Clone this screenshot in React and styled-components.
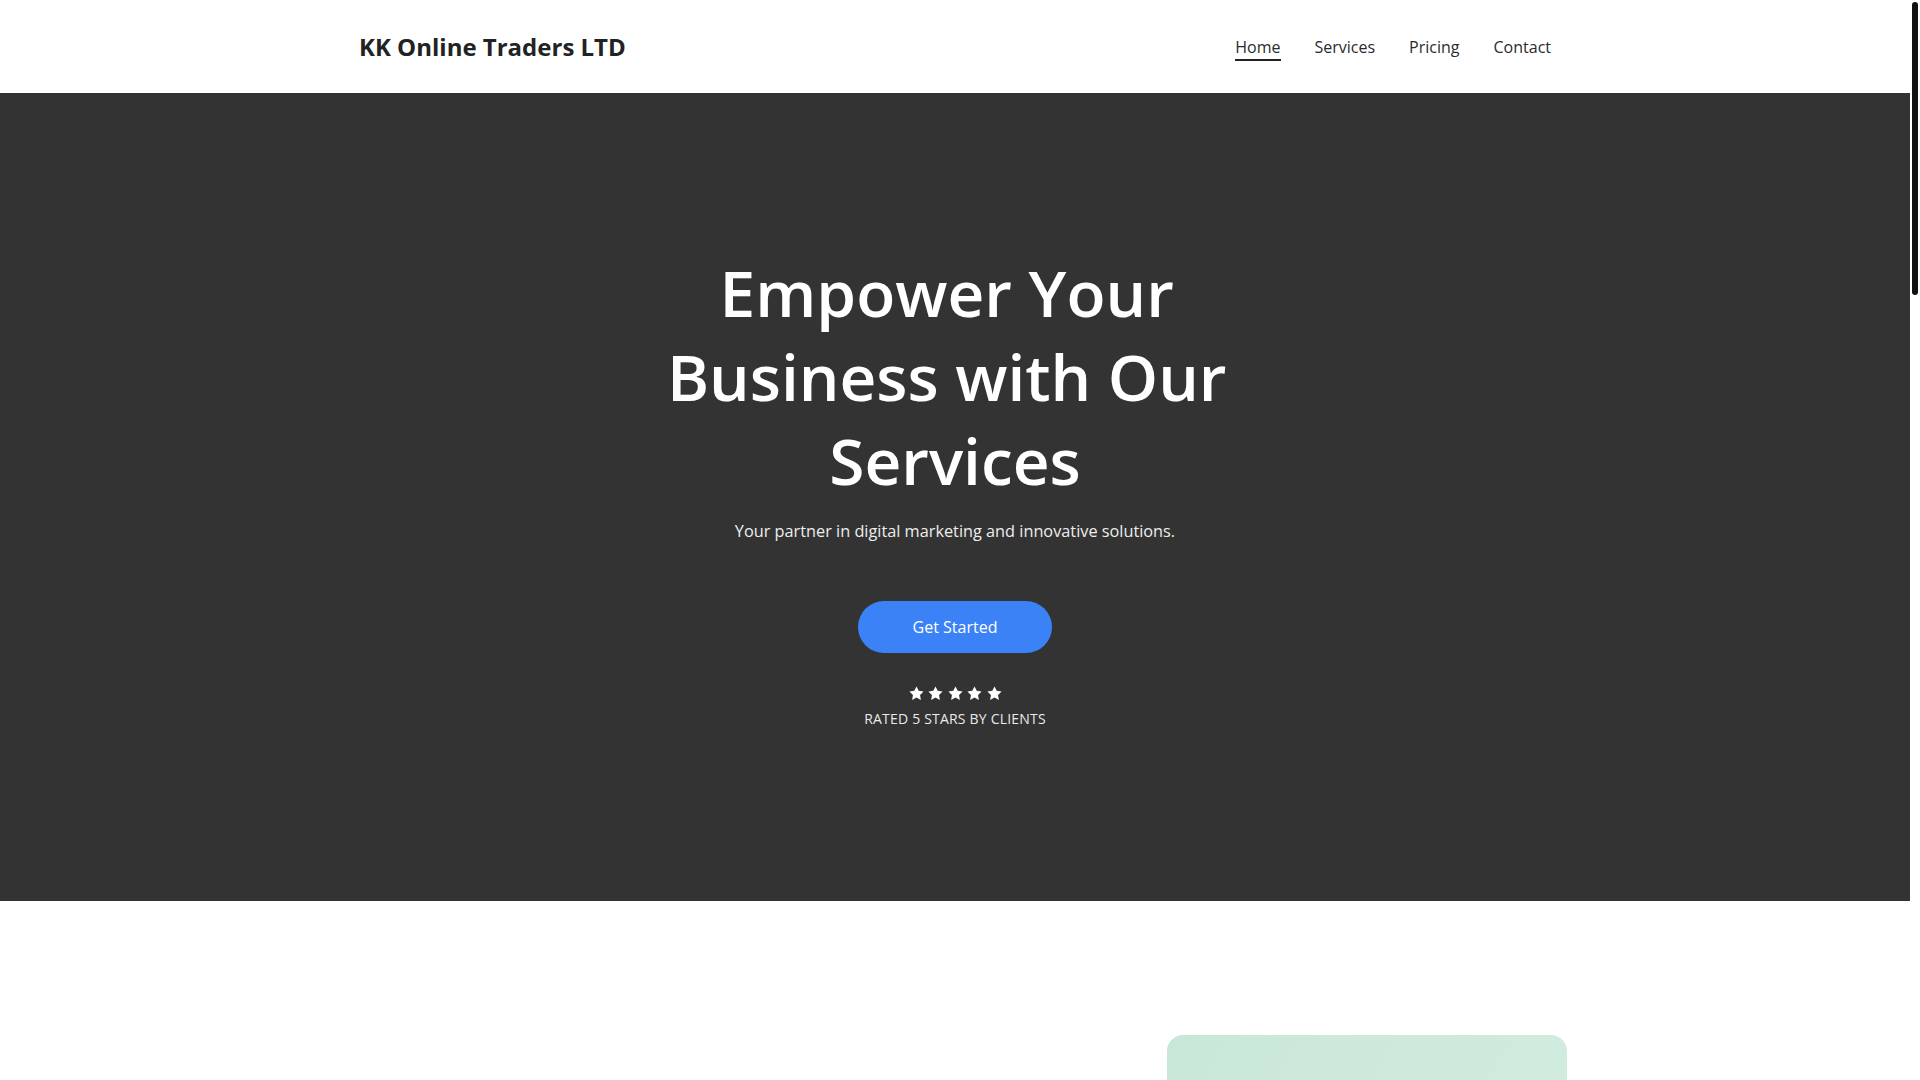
import React from "react";
import styled, { createGlobalStyle } from "styled-components";

const GlobalStyle = createGlobalStyle`
  * { box-sizing: border-box; }
  html, body {
    margin: 0;
    padding: 0;
    height: 100%;
    overflow: hidden;
    background: #fff;
    font-family: "Open Sans", "Noto Sans", sans-serif;
    color: #222;
  }
`;

// page shell: scrolling content plus the thin scroll rail on the right
const Shell = styled.div`
  display: flex;
  height: 100vh;
`;

const Main = styled.main`
  flex: 1;
  min-width: 0;
  overflow-y: auto;
  scrollbar-width: none;
  background: #fff;

  &::-webkit-scrollbar {
    display: none;
  }
`;

const Rail = styled.div`
  width: 10px;
  flex-shrink: 0;
  background: #fff;
  padding: 2px;
`;

const Thumb = styled.div`
  height: 293px;
  border-radius: 4px;
  background: #111;
`;

const Header = styled.header`
  height: 93px;
  background: #fff;
  display: flex;
  align-items: center;
`;

const Container = styled.div`
  width: 100%;
  max-width: ${(p) => p.$max || 1200}px;
  margin: 0 auto;
  padding: 0 4px;
`;

const HeaderInner = styled(Container)`
  display: flex;
  align-items: center;
  justify-content: space-between;
`;

const Brand = styled.div`
  font-size: 24px;
  font-weight: 700;
  line-height: 1.5;
  color: #222;
`;

const Nav = styled.nav`
  display: flex;
  gap: 34px;
`;

const NavLink = styled.a`
  font-size: 16px;
  line-height: 1.5;
  color: #2b2b2b;
  text-decoration: none;
  padding-top: 2px;
  border-bottom: 2px solid ${(p) => (p.$active ? "#222" : "transparent")};
  cursor: pointer;
`;

const Hero = styled.section`
  background: #333333;
  padding: 158px 20px 172px;
  display: flex;
  flex-direction: column;
  align-items: center;
  text-align: center;
  color: #fff;
`;

const HeroTitle = styled.h1`
  margin: 0 0 16px;
  max-width: 640px;
  font-size: 64px;
  font-weight: 600;
  line-height: 1.31;
  white-space: break-spaces;
`;

const HeroText = styled.p`
  margin: 0 0 56px;
  font-size: 16.3px;
  line-height: 1.6;
  color: #eeeeee;
`;

const Button = styled.button`
  font-family: inherit;
  font-size: 16px;
  line-height: 26px;
  padding: 13px 55px;
  border: none;
  border-radius: 999px;
  background: #3b82f6;
  color: #fff;
  cursor: pointer;
`;

const Stars = styled.div`
  display: flex;
  gap: 2.5px;
  margin-top: 32px;
`;

const Rating = styled.div`
  margin-top: 6px;
  font-size: 14px;
  letter-spacing: 0.2px;
  line-height: 1.5;
  color: #eaeaea;
`;

const About = styled.section`
  padding: 134px 0 140px;
`;

const AboutGrid = styled(Container)`
  display: grid;
  grid-template-columns: 1fr 400px;
  gap: 64px;
  align-items: center;
`;

const AboutText = styled.div`
  text-align: ${(p) => (p.$center ? "center" : "left")};

  h2 {
    margin: 0 0 16px;
    font-size: 40px;
    font-weight: 600;
    color: #222;
  }
  p {
    margin: 0;
    font-size: 18px;
    line-height: 1.7;
    color: #555;
  }
`;

const Illustration = styled.div`
  height: 420px;
  border-radius: 16px;
  background: linear-gradient(120deg, #c9e7d7 0%, #d4eee3 100%);
`;

const Section = styled.section`
  padding: 120px 0;
  background: ${(p) => p.$bg || "#fff"};
`;

const SectionTitle = styled.h2`
  margin: 0 0 48px;
  text-align: center;
  font-size: 40px;
  font-weight: 600;
  color: #222;
`;

const CardGrid = styled(Container)`
  display: grid;
  grid-template-columns: repeat(3, 1fr);
  gap: 32px;
`;

const Card = styled.div`
  background: #fff;
  border-radius: 16px;
  padding: 40px 32px;
  box-shadow: 0 2px 10px rgba(0, 0, 0, 0.08);
  min-height: 280px;

  h3 {
    margin: 0 0 12px;
    font-size: 22px;
    color: #222;
  }
  p {
    margin: 0;
    font-size: 16px;
    line-height: 1.6;
    color: #666;
  }
`;

const Price = styled.div`
  font-size: 40px;
  font-weight: 700;
  color: #222;
  margin: 16px 0;
`;

const Form = styled.form`
  max-width: 560px;
  margin: 32px auto 0;
  display: flex;
  flex-direction: column;
  gap: 16px;
`;

const Input = styled.input`
  font-family: inherit;
  font-size: 16px;
  padding: 14px 18px;
  border: 1px solid #ddd;
  border-radius: 10px;
`;

const Footer = styled.footer`
  background: #333;
  color: #ddd;
  text-align: center;
  padding: 48px 0;
  font-size: 14px;
`;

function Star() {
  return (
    <svg width="17" height="17" viewBox="0 0 24 24" fill="#fff">
      <path d="M12 2l3.09 6.26L22 9.27l-5 4.87 1.18 6.88L12 17.77l-6.18 3.25L7 14.14 2 9.27l6.91-1.01L12 2z" />
    </svg>
  );
}

const services = [
  { title: "Digital Marketing", text: "Grow your audience with targeted campaigns across search and social channels." },
  { title: "Web Development", text: "Fast, modern and responsive websites built to convert visitors into customers." },
  { title: "Brand Strategy", text: "Shape a clear identity and voice that sets your business apart." },
];

const plans = [
  { title: "Starter", price: "£99", text: "Essential tools for small businesses getting online." },
  { title: "Business", price: "£249", text: "Everything you need to grow and manage campaigns." },
  { title: "Enterprise", price: "£499", text: "Tailored solutions and dedicated support for scale." },
];

const reviews = [
  { title: "Sarah M.", text: "Our online sales doubled within three months. Fantastic team to work with." },
  { title: "James K.", text: "Professional, responsive and always full of fresh ideas for our brand." },
  { title: "Priya R.", text: "The new website is beautiful and our customers love how easy it is to use." },
];

export default function App() {
  return (
    <Shell>
      <GlobalStyle />
      <Main>
        <Header>
          <HeaderInner>
            <Brand>KK Online Traders LTD</Brand>
            <Nav>
              <NavLink $active>Home</NavLink>
              <NavLink>Services</NavLink>
              <NavLink>Pricing</NavLink>
              <NavLink>Contact</NavLink>
            </Nav>
          </HeaderInner>
        </Header>

        <Hero>
          <HeroTitle>Empower Your Business with Our Services</HeroTitle>
          <HeroText>Your partner in digital marketing and innovative solutions.</HeroText>
          <Button>Get Started</Button>
          <Stars>
            {[0, 1, 2, 3, 4].map((i) => (
              <Star key={i} />
            ))}
          </Stars>
          <Rating>RATED 5 STARS BY CLIENTS</Rating>
        </Hero>

        <About>
          <AboutGrid $max={1232}>
            <AboutText>
              <h2>Who We Are</h2>
              <p>
                KK Online Traders LTD helps businesses of every size reach more
                customers online. We combine data-driven marketing with creative
                thinking to deliver results that last.
              </p>
            </AboutText>
            <Illustration />
          </AboutGrid>
        </About>

        <Section $bg="#f7f7f7">
          <SectionTitle>Services</SectionTitle>
          <CardGrid>
            {services.map((s) => (
              <Card key={s.title}>
                <h3>{s.title}</h3>
                <p>{s.text}</p>
              </Card>
            ))}
          </CardGrid>
        </Section>

        <Section>
          <SectionTitle>Pricing</SectionTitle>
          <CardGrid>
            {plans.map((p) => (
              <Card key={p.title}>
                <h3>{p.title}</h3>
                <Price>{p.price}</Price>
                <p>{p.text}</p>
              </Card>
            ))}
          </CardGrid>
        </Section>

        <Section $bg="#f7f7f7">
          <SectionTitle>What Our Clients Say</SectionTitle>
          <CardGrid>
            {reviews.map((r) => (
              <Card key={r.title}>
                <h3>{r.title}</h3>
                <p>{r.text}</p>
              </Card>
            ))}
          </CardGrid>
        </Section>

        <Section>
          <SectionTitle>Contact</SectionTitle>
          <Container>
            <AboutText $center>
              <p>info@kkonlinetraders.co.uk</p>
            </AboutText>
            <Form>
              <Input placeholder="Your name" />
              <Input placeholder="Your email" />
              <Button type="button">Send Message</Button>
            </Form>
          </Container>
        </Section>

        <Footer>© 2024 KK Online Traders LTD. All rights reserved.</Footer>
      </Main>
      <Rail>
        <Thumb />
      </Rail>
    </Shell>
  );
}
